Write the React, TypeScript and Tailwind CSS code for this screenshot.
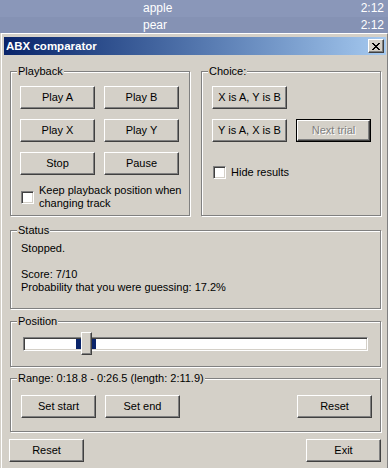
import React from "react";

const raised =
  "border border-t-white border-l-white border-r-[#404040] border-b-[#404040] shadow-[inset_-1px_-1px_0_#808080]";

function Btn({ children, className = "" }: { children: React.ReactNode; className?: string }) {
  return (
    <div
      className={`${raised} bg-[#d4d0c8] w-[75px] h-[23px] flex items-center justify-center text-black ${className}`}
    >
      {children}
    </div>
  );
}

function Check() {
  return (
    <div className="w-[13px] h-[13px] shrink-0 bg-white border border-t-[#808080] border-l-[#808080] border-r-white border-b-white shadow-[inset_1px_1px_0_#404040,inset_-1px_-1px_0_#d4d0c8]" />
  );
}

function Group({
  label,
  className = "",
  children,
}: {
  label: string;
  className?: string;
  children?: React.ReactNode;
}) {
  return (
    <div
      className={`relative border border-[#808080] shadow-[inset_1px_1px_0_#fff,1px_1px_0_#fff] ${className}`}
    >
      <span className="absolute -top-[7px] left-[6px] px-[1px] bg-[#d4d0c8] leading-[13px] text-black">
        {label}
      </span>
      {children}
    </div>
  );
}

export default function App() {
  return (
    <div
      className="w-[388px] h-[468px] overflow-hidden bg-[#d4d0c8] text-[11px] leading-[13px] text-black"
      style={{ fontFamily: '"Liberation Sans", Arial, sans-serif' }}
    >
      {/* background playlist */}
      <div className="h-[17px] bg-[#8a97b9] flex items-center justify-between pl-[143px] pr-[4px] text-white text-[12px]">
        <span>apple</span>
        <span>2:12</span>
      </div>
      <div className="h-[16px] bg-[#8592b4] flex items-center justify-between pl-[143px] pr-[4px] text-white text-[12px]">
        <span>pear</span>
        <span>2:12</span>
      </div>

      {/* window */}
      <div className="ml-px border-t border-l border-white border-r border-r-[#808080] pt-[3px] pl-[2px] pr-[1px] h-[435px]">
        {/* title bar */}
        <div className="h-[18px] bg-gradient-to-r from-[#0a246a] to-[#a6caf0] flex items-center justify-between pl-[2px] pr-[2px]">
          <span className="text-white font-bold text-[11.5px]">ABX comparator</span>
          <div className={`${raised} bg-[#d4d0c8] w-[16px] h-[14px] flex items-center justify-center`}>
            <svg width="8" height="7" viewBox="0 0 8 7" shapeRendering="crispEdges">
              <path
                d="M0 0h2v1H0zM6 0h2v1H6zM1 1h2v1H1zM5 1h2v1H5zM2 2h4v1H2zM3 3h2v1H3zM2 4h4v1H2zM1 5h2v1H1zM5 5h2v1H5zM0 6h2v1H0zM6 6h2v1H6z"
                fill="#000"
              />
            </svg>
          </div>
        </div>

        {/* body */}
        <div className="pl-[6px] pt-[16px]">
          <div className="flex gap-[11px]">
            <Group label="Playback" className="w-[180px] h-[145px] pt-[14px] pl-[9px]">
              <div className="grid grid-cols-[75px_75px] gap-x-[9px] gap-y-[10px]">
                <Btn>Play A</Btn>
                <Btn>Play B</Btn>
                <Btn>Play X</Btn>
                <Btn>Play Y</Btn>
                <Btn>Stop</Btn>
                <Btn>Pause</Btn>
              </div>
              <div className="flex items-center gap-[5px] mt-[9px] ml-px">
                <Check />
                <div>
                  Keep playback position when
                  <br />
                  changing track
                </div>
              </div>
            </Group>
            <Group label="Choice:" className="w-[180px] h-[145px] pt-[14px] pl-[10px]">
              <div className="flex flex-col gap-[10px]">
                <Btn>X is A, Y is B</Btn>
                <div className="flex gap-[9px]">
                  <Btn>Y is A, X is B</Btn>
                  <div className="border border-black w-[75px] h-[23px]">
                    <div
                      className={`${raised} bg-[#d4d0c8] w-full h-full flex items-center justify-center text-[#808080] [text-shadow:1px_1px_0_#fff]`}
                    >
                      Next trial
                    </div>
                  </div>
                </div>
              </div>
              <div className="flex items-center gap-[5px] mt-[24px] ml-px">
                <Check />
                <span>Hide results</span>
              </div>
            </Group>
          </div>

          <Group label="Status" className="w-[371px] h-[79px] mt-[14px] pt-[11px] pl-[10px]">
            <div>Stopped.</div>
            <div className="h-[13px]" />
            <div>Score: 7/10</div>
            <div>Probability that you were guessing: 17.2%</div>
          </Group>

          <Group label="Position" className="w-[371px] h-[46px] mt-[12px] pt-[15px] pl-[12px]">
            <div className="relative w-[345px] h-[14px] bg-white border border-t-[#808080] border-l-[#808080] border-r-white border-b-white shadow-[inset_1px_1px_0_#404040,inset_-1px_-1px_0_#d4d0c8]">
              <div className="absolute left-[52px] top-[1px] w-[20px] h-[10px] bg-[#0a246a]" />
              <div
                className={`absolute left-[57px] -top-[6px] w-[11px] h-[23px] ${raised} bg-[#d4d0c8]`}
              />
            </div>
          </Group>

          <Group
            label="Range: 0:18.8 - 0:26.5 (length: 2:11.9)"
            className="w-[371px] h-[54px] mt-[11px] pt-[16px] pl-[10px] pr-[8px]"
          >
            <div className="flex">
              <Btn>Set start</Btn>
              <Btn className="ml-[9px]">Set end</Btn>
              <Btn className="ml-auto">Reset</Btn>
            </div>
          </Group>

          <div className="flex justify-between w-[372px] -ml-px mt-[7px]">
            <Btn>Reset</Btn>
            <Btn>Exit</Btn>
          </div>
        </div>
      </div>
    </div>
  );
}
